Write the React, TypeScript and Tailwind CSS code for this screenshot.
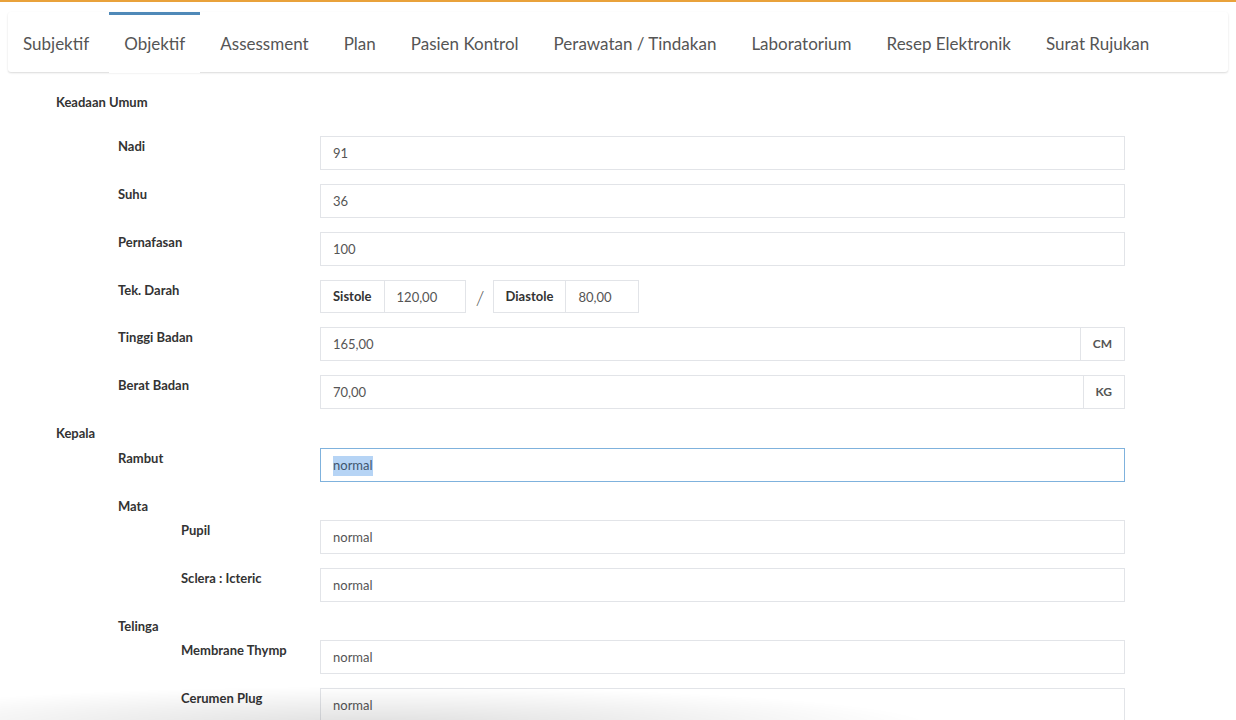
import React from 'react'

const tabs = [
  'Subjektif',
  'Objektif',
  'Assessment',
  'Plan',
  'Pasien Kontrol',
  'Perawatan / Tindakan',
  'Laboratorium',
  'Resep Elektronik',
  'Surat Rujukan',
]

function Label({ text, indent }: { text: string; indent: number }) {
  const pad = indent === 0 ? 'pl-[56px]' : indent === 1 ? 'pl-[118px]' : 'pl-[181px]'
  return (
    <div className={`w-[320px] shrink-0 ${pad} text-[13px] leading-[20px] font-bold text-[#333]`}>{text}</div>
  )
}

function Field({ label, value, indent = 1, addon }: { label: string; value: string; indent?: number; addon?: string }) {
  return (
    <div className="flex mb-[14px]">
      <Label text={label} indent={indent} />
      <div className="flex flex-1 h-[34px]">
        <div className="flex-1 flex items-center pt-[2px] px-[12px] border border-[#e2e4e8] text-[13px] text-[#555] bg-white">
          {value}
        </div>
        {addon && (
          <div className="flex items-center justify-center px-[12px] border border-l-0 border-[#e2e4e8] text-[12px] font-bold text-[#555]">
            {addon}
          </div>
        )}
      </div>
    </div>
  )
}

function Group({ label, indent, h = 'h-[24px]' }: { label: string; indent: number; h?: string }) {
  return (
    <div className={`flex ${h}`}>
      <Label text={label} indent={indent} />
    </div>
  )
}

export default function App() {
  return (
    <div className="relative min-h-screen bg-white font-[Lato,'Open_Sans',sans-serif]">
      <div className="h-[2px] bg-[#e9a23b]" />
      <div className="px-[8px] pt-[10px]">
        <div className="flex h-[60px] rounded-[3px] bg-white shadow-[0_1px_2px_rgba(0,0,0,0.15)]">
          {tabs.map((t) => {
            const active = t === 'Objektif'
            return (
              <div
                key={t}
                className={`flex items-center px-[15px] mr-[5px] border-t-[3px] text-[17px] text-[#555] ${
                  active ? 'border-[#4f89b8] bg-white h-[61px] relative z-10' : 'border-transparent'
                }`}
              >
                {t}
              </div>
            )
          })}
        </div>
      </div>

      <div className="pt-[20px] pr-[111px]">
        <div className="flex h-[44px]">
          <Label text="Keadaan Umum" indent={0} />
        </div>
        <Field label="Nadi" value="91" />
        <Field label="Suhu" value="36" />
        <Field label="Pernafasan" value="100" />
        <div className="flex mb-[14px]">
          <Label text="Tek. Darah" indent={1} />
          <div className="flex items-center h-[33px]">
            <div className="flex items-center h-full px-[12px] border border-[#e2e4e8] text-[13px] font-bold text-[#333]">
              Sistole
            </div>
            <div className="flex items-center h-full w-[81px] pt-[2px] px-[12px] border border-l-0 border-[#e2e4e8] text-[13px] text-[#555]">
              120,00
            </div>
            <div className="w-[27px] pl-[2px] text-center text-[20px] font-light text-[#555]">/</div>
            <div className="flex items-center h-full px-[12px] border border-[#e2e4e8] text-[13px] font-bold text-[#333]">
              Diastole
            </div>
            <div className="flex items-center h-full w-[73px] pt-[2px] px-[12px] border border-l-0 border-[#e2e4e8] text-[13px] text-[#555]">
              80,00
            </div>
          </div>
        </div>
        <Field label="Tinggi Badan" value="165,00" addon="CM" />
        <Field label="Berat Badan" value="70,00" addon="KG" />

        <Group label="Kepala" indent={0} h="h-[25px]" />
        <div className="flex mb-[14px]">
          <Label text="Rambut" indent={1} />
          <div className="flex-1 h-[34px] flex items-center pt-[2px] px-[12px] border border-[#7fb2dd] text-[13px] text-[#40566e]">
            <span className="bg-[#b6d4f5]">normal</span>
          </div>
        </div>
        <Group label="Mata" indent={1} />
        <Field label="Pupil" value="normal" indent={2} />
        <Field label="Sclera : Icteric" value="normal" indent={2} />
        <Group label="Telinga" indent={1} />
        <Field label="Membrane Thymp" value="normal" indent={2} />
        <Field label="Cerumen Plug" value="normal" indent={2} />
      </div>

      <div className="pointer-events-none fixed left-0 top-[686px] h-[40px] w-[940px] bg-[radial-gradient(ellipse_at_40%_100%,rgba(0,0,0,0.13),rgba(0,0,0,0)_70%)]" />
    </div>
  )
}
